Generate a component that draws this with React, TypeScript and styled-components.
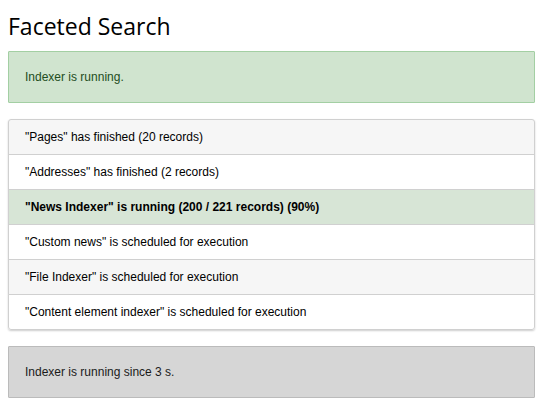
import React from "react";
import styled, { createGlobalStyle } from "styled-components";

const Global = createGlobalStyle`
  html, body { margin: 0; padding: 0; background: #fff; }
  body { font-family: "Liberation Sans", Arial, sans-serif; font-size: 12px; color: #000; }
`;

const Page = styled.div`
  padding: 0 15px 0 8px;
  display: flex;
  flex-direction: column;
`;

const Title = styled.h1`
  font-family: "Open Sans", sans-serif;
  font-weight: 400;
  font-size: 23px;
  line-height: 30px;
  margin: 11px 0 10px 0;
  color: #000;
`;

const Alert = styled.div<{ $tone: "success" | "info" }>`
  padding: 15px 16px;
  line-height: 20px;
  border: 1px solid ${(p) => (p.$tone === "success" ? "#a3cfa3" : "#bbbbbb")};
  background: ${(p) => (p.$tone === "success" ? "#d0e4cf" : "#d6d6d6")};
  color: ${(p) => (p.$tone === "success" ? "#234d22" : "#1a1a1a")};
  border-radius: 1px;
  margin-bottom: 16px;
`;

const List = styled.ul`
  list-style: none;
  margin: 0 0 16px 0;
  padding: 0;
  border-radius: 3px;
  box-shadow: 0 1px 2px rgba(0, 0, 0, 0.2);
`;

const Item = styled.li<{ $active?: boolean; $striped?: boolean }>`
  padding: 8px 16px;
  line-height: 18px;
  border: 1px solid #d0d0d0;
  margin-bottom: -1px;
  background: ${(p) => (p.$active ? "#d7e5d6" : p.$striped ? "#f6f6f6" : "#fff")};
  font-weight: ${(p) => (p.$active ? 700 : 400)};
  color: #000;
  &:first-child { border-top-left-radius: 3px; border-top-right-radius: 3px; }
  &:last-child { margin-bottom: 0; border-bottom-left-radius: 3px; border-bottom-right-radius: 3px; }
`;

const rows = [
  { text: '"Pages" has finished (20 records)' },
  { text: '"Addresses" has finished (2 records)' },
  { text: '"News Indexer" is running (200 / 221 records) (90%)', active: true },
  { text: '"Custom news" is scheduled for execution' },
  { text: '"File Indexer" is scheduled for execution' },
  { text: '"Content element indexer" is scheduled for execution' },
];

export default function App() {
  return (
    <>
      <Global />
      <Page>
        <Title>Faceted Search</Title>
        <Alert $tone="success">Indexer is running.</Alert>
        <List>
          {rows.map((r, i) => (
            <Item key={i} $active={r.active} $striped={i % 2 === 0}>
              {r.text}
            </Item>
          ))}
        </List>
        <Alert $tone="info">Indexer is running since 3 s.</Alert>
      </Page>
    </>
  );
}
